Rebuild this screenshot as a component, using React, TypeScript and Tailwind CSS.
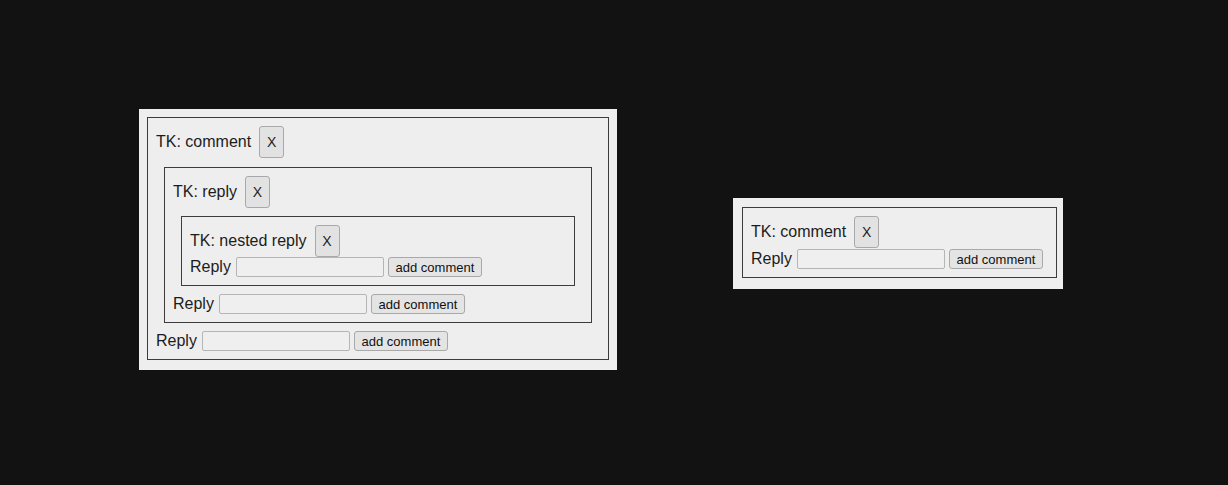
import React from 'react'

type Comment = {
  id: string
  text: string
  replies: Comment[]
}

const leftThread: Comment = {
  id: 'c1',
  text: 'TK: comment',
  replies: [
    {
      id: 'c2',
      text: 'TK: reply',
      replies: [{ id: 'c3', text: 'TK: nested reply', replies: [] }],
    },
  ],
}

const rightThread: Comment = { id: 'c4', text: 'TK: comment', replies: [] }

function ReplyForm() {
  return (
    <div className="flex h-[20px] items-center">
      <span className="mr-[5px] text-[16px] leading-none">Reply</span>
      <input
        type="text"
        className="mr-1 h-[20px] w-[148px] rounded-[2px] border border-[#b5b5b5] bg-[#efefef] px-1 text-[13px] outline-none"
      />
      <button className="h-[20px] w-[94px] rounded-[3px] border border-[#a9a9a9] bg-[#e4e4e4] text-[13px] leading-none text-[#111]">
        add comment
      </button>
    </div>
  )
}

function CommentBox({ comment, nested }: { comment: Comment; nested?: boolean }) {
  return (
    <div className={`border border-[#3c3c3c] p-2 ${nested ? 'm-2' : ''}`}>
      <div className={`flex items-start gap-2 ${nested ? 'h-[32px]' : 'h-[33px]'}`}>
        <span className="flex h-[32px] items-center text-[16px] leading-none">{comment.text}</span>
        <button className="h-[32px] w-[25px] rounded-[3px] border border-[#a9a9a9] bg-[#e2e2e2] text-[14px] leading-none text-[#222]">
          X
        </button>
      </div>
      {comment.replies.map((r) => (
        <CommentBox key={r.id} comment={r} nested />
      ))}
      <ReplyForm />
    </div>
  )
}

export default function App() {
  return (
    <div
      className="flex h-[485px] w-full items-start bg-[#121212] pl-[139px] text-[#1c1c1c]"
      style={{ fontFamily: '"Liberation Sans", Arial, sans-serif' }}
    >
      <div className="mt-[109px] h-[261px] w-[478px] bg-[#eeeeee] px-2 pt-2">
        <CommentBox comment={leftThread} />
      </div>
      <div className="ml-[116px] mt-[198px] h-[91px] w-[330px] bg-[#eeeeee] pl-[9px] pr-[6px] pt-[9px]">
        <CommentBox comment={rightThread} />
      </div>
    </div>
  )
}
